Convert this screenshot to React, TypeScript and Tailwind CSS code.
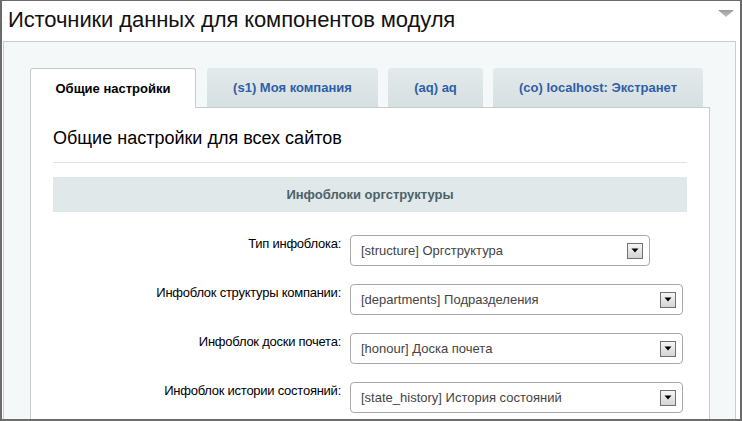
import React from "react";

const font = { fontFamily: '"Liberation Sans", Arial, sans-serif' };

function SelectBox({ text, width }: { text: string; width: string }) {
  return (
    <div
      className={`${width} h-[31px] flex items-center justify-between rounded-[4px] border border-[#a8a8a8] bg-white pl-[10px] pr-[6px]`}
    >
      <span className="text-[13px] text-[#444]">{text}</span>
      <div className="w-[16px] h-[16px] border border-[#707070] bg-gradient-to-b from-[#f6f6f6] to-[#d4d4d4] flex items-center justify-center">
        <svg width="8" height="5" viewBox="0 0 8 5">
          <polygon points="0.5,0.5 7.5,0.5 4,4.5" fill="#000" />
        </svg>
      </div>
    </div>
  );
}

function Row({ label, value, width }: { label: string; value: string; width: string }) {
  return (
    <div className="flex items-start">
      <div className="w-[288px] text-right text-[13px] leading-[16px] pt-[1px] tracking-[-0.25px] text-[#000]">{label}</div>
      <div className="ml-[9px]">
        <SelectBox text={value} width={width} />
      </div>
    </div>
  );
}

export default function App() {
  const tabs = [
    { label: "(s1) Моя компания", w: "w-[171px]", ml: "ml-[11px]" },
    { label: "(aq) aq", w: "w-[95px]", ml: "ml-[10px]" },
    { label: "(co) localhost: Экстранет", w: "w-[210px]", ml: "ml-[10px]" },
  ];
  return (
    <div
      style={font}
      className="w-[742px] h-[421px] overflow-hidden bg-white border-x-2 border-b-2 border-t border-[#6b6b6b] flex flex-col"
    >
      <div className="h-[40px] shrink-0 flex items-center justify-between pl-[6px] pr-[6px]">
        <div className="text-[22px] leading-[26px] text-[#111] pb-[2px] tracking-[-0.1px]">
          Источники данных для компонентов модуля
        </div>
        <svg width="16" height="7" viewBox="0 0 16 7" className="self-start mt-[9px]">
          <defs>
            <linearGradient id="tg" x1="0" y1="0" x2="0" y2="1">
              <stop offset="0" stopColor="#9a9a9a" />
              <stop offset="1" stopColor="#c4c4c4" />
            </linearGradient>
          </defs>
          <polygon points="0,0 16,0 8,7" fill="url(#tg)" />
        </svg>
      </div>
      <div className="flex-1 ml-[1px] mr-[4px] border border-[#c6ced1] bg-[#f5f8f9] pl-[26px] pt-[26px]">
        <div className="h-[39px] flex items-start">
          <div className="relative z-10 w-[166px] h-[40px] bg-white border-x border-t border-[#c6ccce] rounded-t-[3px] flex items-center justify-center text-[13px] font-bold text-[#000]">
            Общие настройки
          </div>
          {tabs.map((t) => (
            <div
              key={t.label}
              className={`${t.w} ${t.ml} h-[39px] rounded-t-[3px] bg-gradient-to-b from-[#e4eaec] to-[#d6dfe1] flex items-center justify-center text-[13px] font-bold text-[#2f5ea8]`}
            >
              {t.label}
            </div>
          ))}
        </div>
        <div className="w-[680px] h-[400px] bg-white border border-[#c6ccce] px-[22px] pt-[19px]">
          <div className="text-[18px] leading-[22px] text-[#000]">Общие настройки для всех сайтов</div>
          <div className="mt-[13px] h-px bg-[#dde1e2]" />
          <div className="mt-[14px] h-[35px] bg-[#e0e8ea] flex items-center justify-center text-[13px] font-bold text-[#4b6267]">
            Инфоблоки оргструктуры
          </div>
          <div className="mt-[23px] flex flex-col gap-[18px]">
            <Row label="Тип инфоблока:" value="[structure] Оргструктура" width="w-[300px]" />
            <Row label="Инфоблок структуры компании:" value="[departments] Подразделения" width="w-[333px]" />
            <Row label="Инфоблок доски почета:" value="[honour] Доска почета" width="w-[333px]" />
            <Row label="Инфоблок истории состояний:" value="[state_history] История состояний" width="w-[333px]" />
          </div>
        </div>
      </div>
    </div>
  );
}
